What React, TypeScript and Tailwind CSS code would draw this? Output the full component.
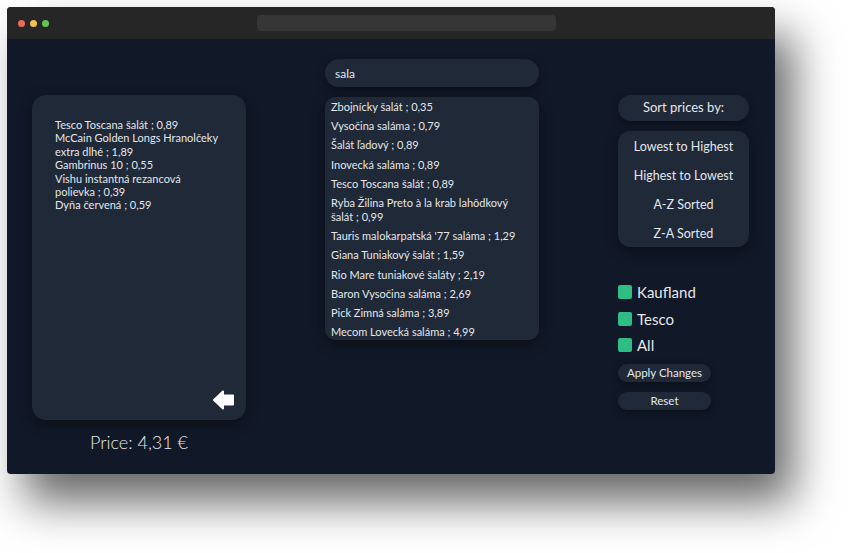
import React from "react";

const font = { fontFamily: "Lato, 'Noto Sans', sans-serif" };

const cart = [
  "Tesco Toscana šalát ; 0,89",
  "McCain Golden Longs Hranolčeky extra dlhé ; 1,89",
  "Gambrinus 10 ; 0,55",
  "Vishu instantná rezancová polievka ; 0,39",
  "Dyňa červená ; 0,59",
];

const results = [
  "Zbojnícky šalát ; 0,35",
  "Vysočina saláma ; 0,79",
  "Šalát ľadový ; 0,89",
  "Inovecká saláma ; 0,89",
  "Tesco Toscana šalát ; 0,89",
  "Ryba Žilina Preto à la krab lahôdkový šalát ; 0,99",
  "Tauris malokarpatská '77 saláma ; 1,29",
  "Giana Tuniakový šalát ; 1,59",
  "Rio Mare tuniakové šaláty ; 2,19",
  "Baron Vysočina saláma ; 2,69",
  "Pick Zimná saláma ; 3,89",
  "Mecom Lovecká saláma ; 4,99",
];

const sorts = ["Lowest to Highest", "Highest to Lowest", "A-Z Sorted", "Z-A Sorted"];
const shops = ["Kaufland", "Tesco", "All"];

function ArrowLeft() {
  return (
    <svg width="22" height="20" viewBox="0 0 22 20">
      <path
        d="M1 10 L10 1.5 L10 5.5 L20 5.5 L20 14.5 L10 14.5 L10 18.5 Z"
        fill="#ffffff"
        stroke="#ffffff"
        strokeWidth="2"
        strokeLinejoin="round"
      />
    </svg>
  );
}

export default function App() {
  return (
    <div className="w-[853px] h-[553px] bg-white pt-[7px] pl-[7px]" style={font}>
      <div className="w-[768px] h-[467px] rounded-[4px] overflow-hidden bg-[#111827] flex flex-col shadow-[18px_28px_45px_rgba(0,0,0,0.6)]">
        <div className="h-[32px] bg-[#262626] flex items-center px-[11px] shrink-0">
          <div className="flex gap-[5px]">
            <div className="w-[7px] h-[7px] rounded-full bg-[#ec6a5e]" />
            <div className="w-[7px] h-[7px] rounded-full bg-[#f4bf4f]" />
            <div className="w-[7px] h-[7px] rounded-full bg-[#61c554]" />
          </div>
          <div className="ml-[208px] w-[299px] h-[16px] rounded-[4px] bg-[#363636]" />
        </div>
        <div className="flex-1 flex items-start pl-[25px] gap-[79px] text-[#e5e7eb]">
          {/* left column */}
          <div className="w-[214px] mt-[56px] flex flex-col items-center">
            <div className="w-[214px] h-[325px] rounded-[14px] bg-[#1f2937] shadow-[0_4px_14px_rgba(0,0,0,0.4)] flex flex-col pt-[23px] pl-[23px] pr-[11px] pb-[10px]">
              <div className="w-[166px] text-[11px] leading-[13.4px]">
                {cart.map((c) => (
                  <div key={c}>{c}</div>
                ))}
              </div>
              <div className="mt-auto self-end">
                <ArrowLeft />
              </div>
            </div>
            <div className="mt-[10px] text-[18px] leading-[24px] font-light text-[#e5e7eb]">Price: 4,31 €</div>
          </div>
          {/* middle column */}
          <div className="w-[214px] mt-[20px] flex flex-col gap-[10px]">
            <input
              readOnly
              value="sala"
              className="w-[214px] h-[28px] rounded-full bg-[#1f2937] px-[10px] text-[12px] text-[#e5e7eb] outline-none shadow-[0_3px_10px_rgba(0,0,0,0.35)]"
              style={font}
            />
            <div className="h-[243px] rounded-[10px] bg-[#1f2937] shadow-[0_4px_14px_rgba(0,0,0,0.4)] pl-[6px] pr-[19px] pt-[3px] flex flex-col gap-[5.2px] text-[11px] leading-[14px] overflow-hidden">
              {results.map((r) => (
                <div key={r}>{r}</div>
              ))}
            </div>
          </div>
          {/* right column */}
          <div className="w-[131px] mt-[56px] flex flex-col">
            <div className="h-[26px] rounded-full bg-[#1f2937] flex items-center justify-center text-[13px] shadow-[0_3px_10px_rgba(0,0,0,0.35)]">
              Sort prices by:
            </div>
            <div className="mt-[10px] h-[116px] rounded-[12px] bg-[#1f2937] flex flex-col shadow-[0_4px_14px_rgba(0,0,0,0.4)]">
              {sorts.map((s) => (
                <div key={s} className="h-[29px] pt-[4px] flex items-center justify-center text-[12.5px]">
                  {s}
                </div>
              ))}
            </div>
            <div className="mt-[35px] flex flex-col gap-[6.5px]">
              {shops.map((s) => (
                <div key={s} className="h-[20px] flex items-center gap-[5px]">
                  <div className="w-[14px] h-[14px] rounded-[2px] bg-[#2ebd85]" />
                  <span className="text-[15px] leading-[20px]">{s}</span>
                </div>
              ))}
            </div>
            <div className="mt-[9px] w-[93px] h-[18px] rounded-full bg-[#1f2937] flex items-center justify-center text-[11.5px] shadow-[0_3px_8px_rgba(0,0,0,0.35)]">
              Apply Changes
            </div>
            <div className="mt-[10px] w-[93px] h-[18px] rounded-full bg-[#1f2937] flex items-center justify-center text-[11.5px] shadow-[0_3px_8px_rgba(0,0,0,0.35)]">
              Reset
            </div>
          </div>
        </div>
      </div>
    </div>
  );
}
